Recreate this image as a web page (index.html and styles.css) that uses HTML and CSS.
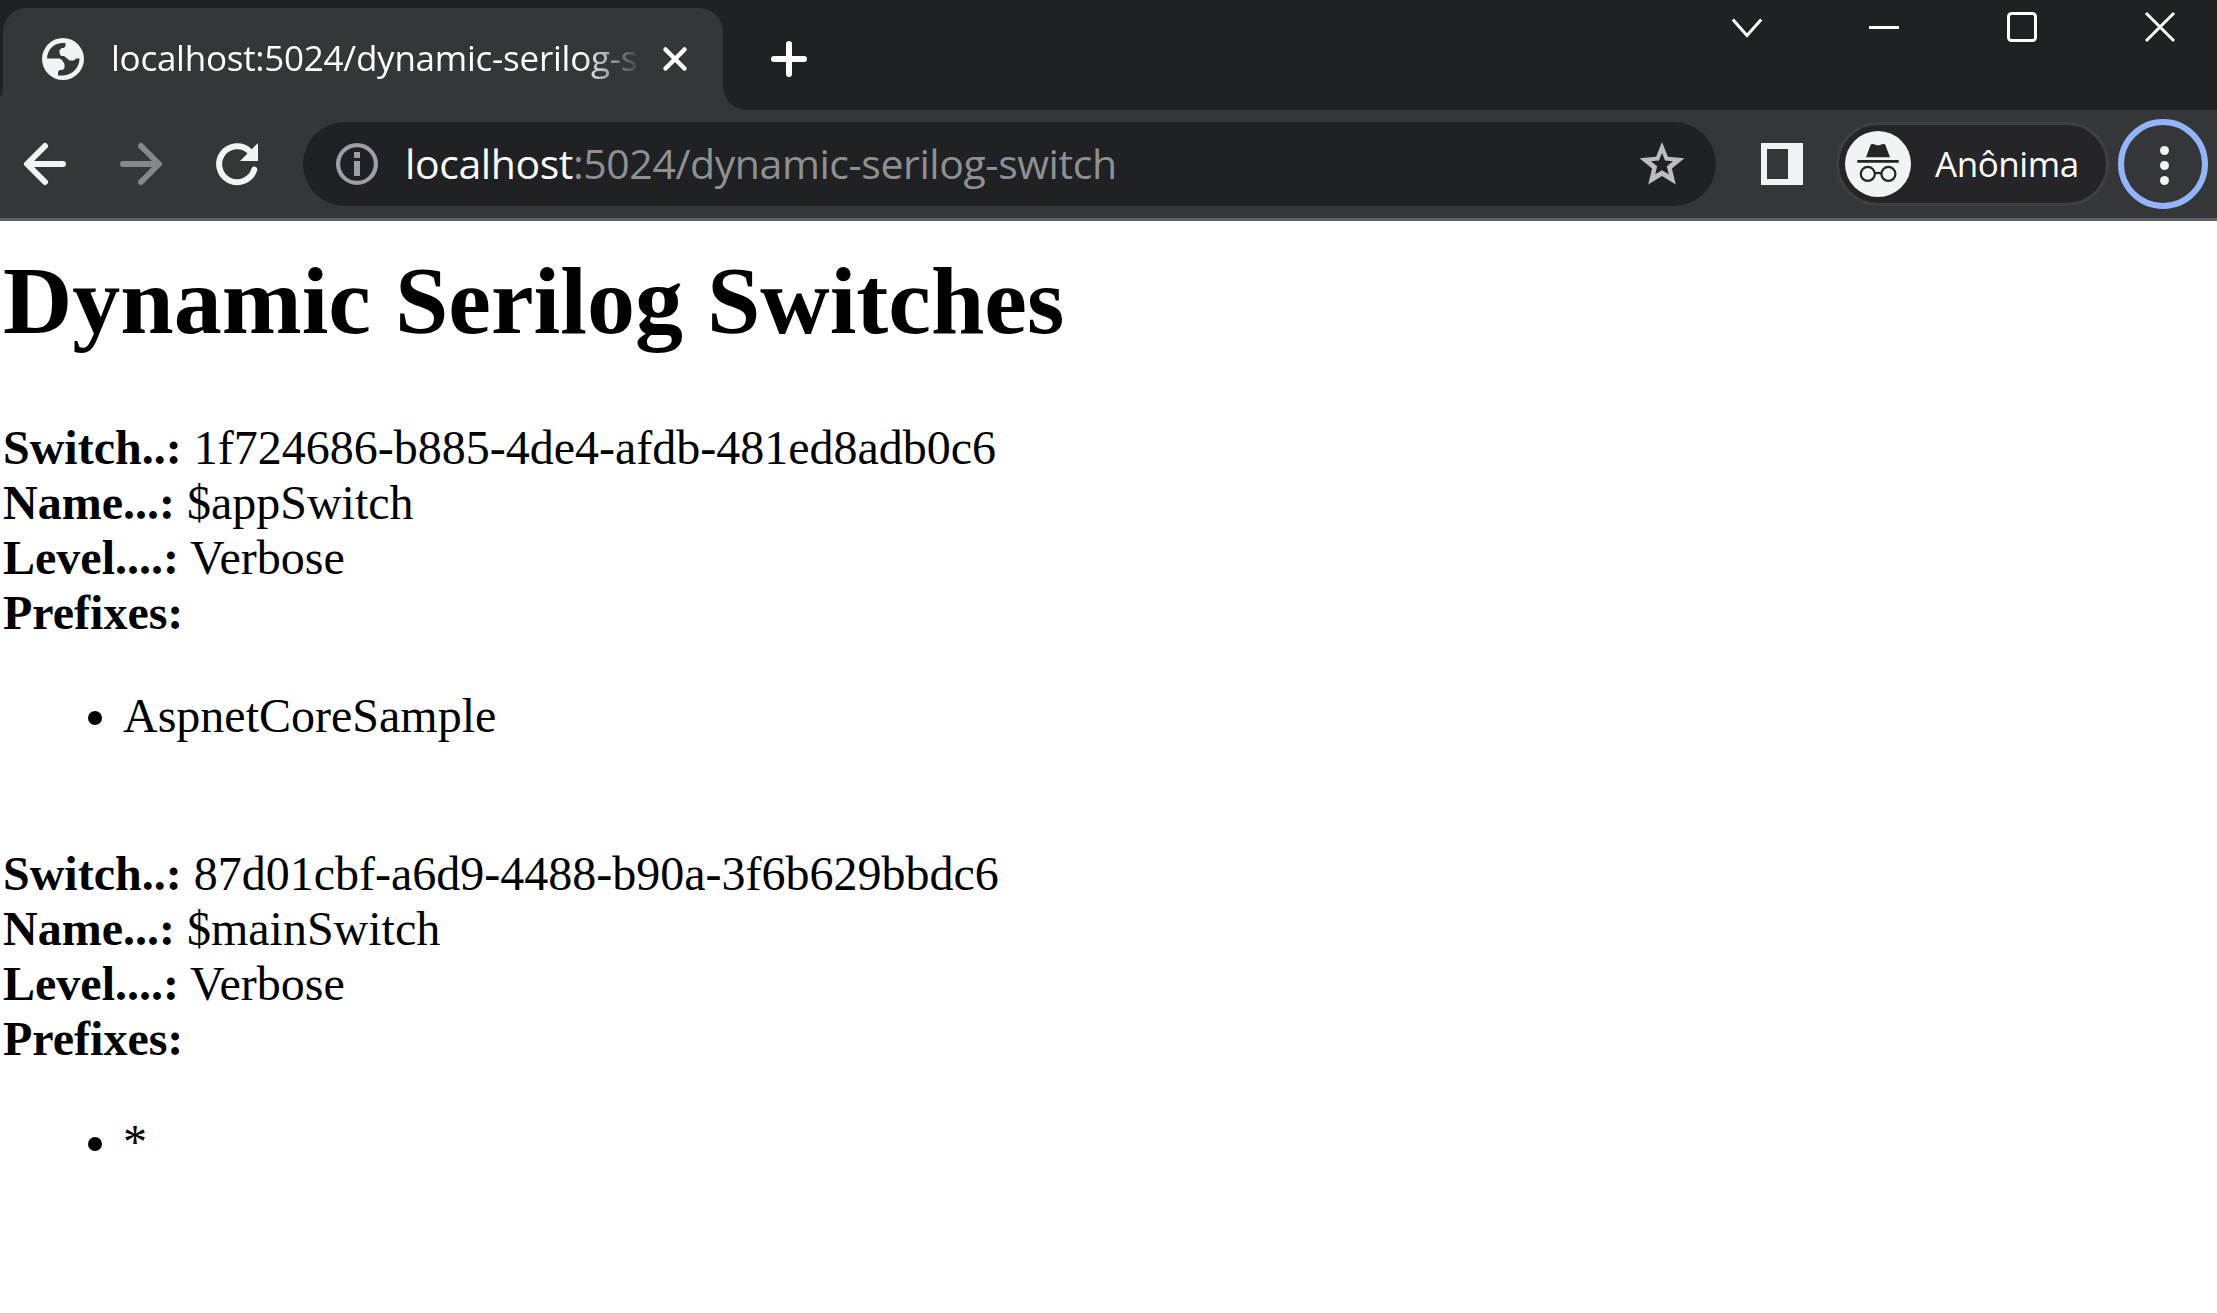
FILE: index.html
```html
<!DOCTYPE html>
<html lang="pt-BR">
<head>
<meta charset="utf-8">
<title>localhost:5024/dynamic-serilog-switch</title>
<link rel="stylesheet" href="styles.css">
</head>
<body>
<header class="browser">
  <div class="tab-strip">
    <div class="tab">
      <svg class="globe" viewBox="0 0 42 42"><circle cx="21" cy="21" r="21" fill="#f1f3f4"/><path fill="#35363a" d="M5 20.500C5.500 11 12 5.500 20 5H23.500V8L22 10H20L17.500 12V15L19 18H22L27.500 22.500H32L34 20.500H37.500C37.500 29 31 37 21 37.500H16V34L17.500 32H20.500L22.500 30V26L20 22L17.500 20.500Z"/></svg>
      <span class="tab-title">localhost:5024/dynamic-serilog-s</span>
      <svg class="tab-close" viewBox="0 0 24 24"><path d="M2.500 2.500 21.500 21.500M21.500 2.500 2.500 21.500"/></svg>
    </div>
    <svg class="new-tab" viewBox="0 0 36 36"><path d="M18 3V33M3 18H33"/></svg>
    <div class="window-buttons">
      <svg viewBox="0 0 30 30"><path d="M.8 7.500 15 23.500 29.200 7.500"/></svg>
      <svg viewBox="0 0 30 30"><path d="M0 15.500H30"/></svg>
      <svg viewBox="0 0 30 30"><rect x="1.500" y="1.500" width="27" height="27" rx="3"/></svg>
      <svg viewBox="0 0 30 30"><path d="M1 1 29 29M29 1 1 29"/></svg>
    </div>
  </div>
  <div class="toolbar">
    <nav class="nav-buttons">
      <svg class="line-icon" viewBox="0 0 42 42"><path d="M39 21H4M21 3 3 21 21 39"/></svg>
      <svg class="line-icon disabled" viewBox="0 0 42 42"><path d="M3 21H38M21 3 39 21 21 39"/></svg>
      <svg class="line-icon" viewBox="0 0 42 42"><path d="M33.700 8.300A18 18 0 1 0 38.300 26.700"/><path class="solid" d="M42 0V18H24Z"/></svg>
    </nav>
    <div class="omnibox">
      <svg class="info" viewBox="0 0 42 42"><circle cx="21" cy="21" r="18.900"/><path d="M21 9V15M21 18V33"/></svg>
      <span class="url">localhost<span class="url-rest">:5024/dynamic-serilog-switch</span></span>
      <svg class="star" viewBox="0 0 46 46"><path fill="#bdbdbd" fill-rule="evenodd" d="M23 1 28.900 15.800 45.500 17.200 32.900 27.600 36.800 43.500 23 35 9.200 43.500 13.100 27.600 .5 17.200 17.100 15.800ZM23 12 20 19.500 12 20.200 18.200 25.300 16.200 33.300 23 29.200 29.800 33.300 27.800 25.300 34 20.200 26 19.500Z"/></svg>
    </div>
    <div class="side-panel"></div>
    <div class="profile">
      <svg class="incognito" viewBox="0 0 66 66"><circle cx="33" cy="33" r="33" fill="#f1f3f4"/><path fill="#242429" d="M21 26.200 25.500 14.200Q26 12.700 28 13L33 14.500 38 13Q40 12.700 40.500 14.200L45 26.200ZM12.300 29H53.700V31.700H12.300Z"/><g fill="none" stroke="#242429" stroke-width="2.200"><circle cx="22.800" cy="42.900" r="7"/><circle cx="43.400" cy="42.900" r="7"/><path d="M29.800 42.400Q33 41.200 36.400 42.400"/></g></svg>
      <span class="profile-name">Anônima</span>
    </div>
    <div class="menu"><i></i><i></i><i></i></div>
  </div>
</header>
<main class="page">
  <h1>Dynamic Serilog Switches</h1>
  <b>Switch..:</b> 1f724686-b885-4de4-afdb-481ed8adb0c6<br>
  <b>Name...:</b> $appSwitch<br>
  <b>Level....:</b> Verbose<br>
  <b>Prefixes:</b>
  <ul><li>AspnetCoreSample</li></ul>
  <br>
  <b>Switch..:</b> 87d01cbf-a6d9-4488-b90a-3f6b629bbdc6<br>
  <b>Name...:</b> $mainSwitch<br>
  <b>Level....:</b> Verbose<br>
  <b>Prefixes:</b>
  <ul><li>*</li></ul>
</main>
</body>
</html>
```
FILE: styles.css
```css
* { box-sizing: border-box; }
body { margin: 0; height: 1313px; overflow: hidden; background: #fff; color: #000; font: 48px "Liberation Serif", serif; }
svg { display: block; flex: none; overflow: visible; }

.browser { font-family: "Open Sans", "Noto Sans", sans-serif; color: #fff; }
.tab-strip { height: 110px; background: #202124; display: flex; padding: 8px 42px 0 3px; }
.tab { position: relative; width: 720px; height: 102px; padding: 0 36px 12px 39px; display: flex; align-items: center; background: #35363a; border-radius: 24px 24px 0 0; }
.tab::before, .tab::after { content: ""; position: absolute; bottom: 0; width: 24px; height: 24px; }
.tab::before { right: 100%; background: radial-gradient(circle at 0 0, transparent 23.500px, #35363a 24.500px); }
.tab::after { left: 100%; background: radial-gradient(circle at 100% 0, transparent 23.500px, #35363a 24.500px); }
.globe { width: 42px; height: 42px; margin-top: 12px; }
.tab-title { width: 527px; margin: 9px 25px 0 27px; white-space: nowrap; font-size: 35px; letter-spacing: -.25px; -webkit-mask-image: linear-gradient(90deg, #000 470px, transparent 532px); mask-image: linear-gradient(90deg, #000 470px, transparent 532px); }
.tab-close { width: 24px; height: 24px; margin-top: 12px; fill: none; stroke: #fff; stroke-width: 4.500; stroke-linecap: round; }
.new-tab { width: 36px; height: 36px; margin: 33px 0 0 48px; fill: none; stroke: #fff; stroke-width: 6; stroke-linecap: round; }
.window-buttons { margin: 4px 0 0 auto; display: flex; gap: 108px; }
.window-buttons svg { width: 30px; height: 30px; fill: none; stroke: #fff; stroke-width: 3; }
.window-buttons svg:first-child { margin-right: -1px; }

.toolbar { height: 111px; background: #35363a; border-bottom: 3px solid #5f5f64; display: flex; align-items: center; padding: 0 9px 0 24px; }
.nav-buttons { display: flex; gap: 54px; }
.line-icon { width: 42px; height: 42px; fill: none; stroke: #f1f3f4; stroke-width: 6; stroke-linecap: round; stroke-linejoin: round; }
.line-icon .solid { fill: #f1f3f4; stroke: none; }
.disabled { stroke: #86878a; }
.omnibox { width: 1413px; height: 84px; margin-left: 45px; padding: 0 31px 0 33px; border-radius: 42px; background: #202124; display: flex; align-items: center; }
.info { width: 42px; height: 42px; fill: none; stroke: #9aa0a6; stroke-width: 4.200; }
.info path { stroke-width: 6; }
.url { margin: 0 0 2px 27px; font-size: 41px; line-height: 60px; white-space: nowrap; letter-spacing: -.42px; }
.url-rest { color: #8f9092; }
.star { width: 46px; height: 46px; margin-left: auto; }
.side-panel { width: 42px; height: 42px; margin-left: 45px; border: 6px solid #f1f3f4; border-right-width: 15px; }
.profile { width: 273px; height: 84px; margin-left: 33px; padding-left: 6px; display: flex; align-items: center; background: #242429; border: 3px solid #3f3f44; border-radius: 42px; }
.incognito { width: 66px; height: 66px; }
.profile-name { margin: 0 0 1px 24px; font-size: 35px; line-height: 50px; letter-spacing: -.45px; }
.menu { width: 90px; height: 90px; margin-left: 9px; padding: 2px 0 0 2px; border: 6px solid #93b4f8; border-radius: 50%; display: flex; flex-direction: column; align-items: center; justify-content: center; gap: 6px; }
.menu i { width: 9px; height: 9px; border-radius: 50%; background: #f1f3f4; }

.page { padding: 24px 3px 0; }
.page h1 { margin: 0 0 64px; font-size: 96px; }
.page ul { margin: 48px 0; padding-left: 120px; }
```
